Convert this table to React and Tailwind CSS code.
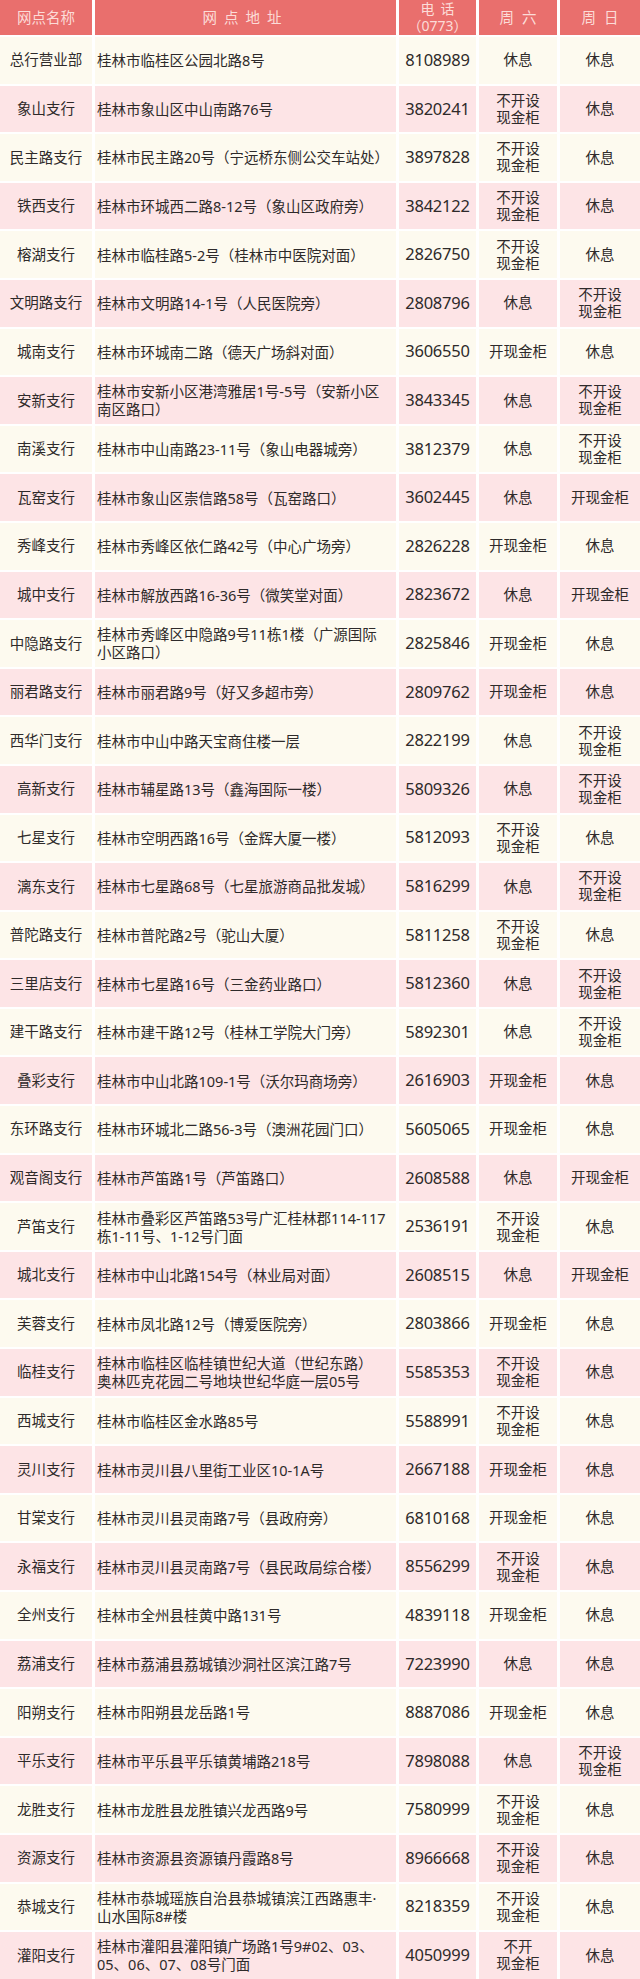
const rows = [
  ["总行营业部", ["桂林市临桂区公园北路8号"], "8108989", "休息", "休息"],
  ["象山支行", ["桂林市象山区中山南路76号"], "3820241", "不开设现金柜", "休息"],
  ["民主路支行", ["桂林市民主路20号（宁远桥东侧公交车站处）"], "3897828", "不开设现金柜", "休息"],
  ["铁西支行", ["桂林市环城西二路8-12号（象山区政府旁）"], "3842122", "不开设现金柜", "休息"],
  ["榕湖支行", ["桂林市临桂路5-2号（桂林市中医院对面）"], "2826750", "不开设现金柜", "休息"],
  ["文明路支行", ["桂林市文明路14-1号（人民医院旁）"], "2808796", "休息", "不开设现金柜"],
  ["城南支行", ["桂林市环城南二路（德天广场斜对面）"], "3606550", "开现金柜", "休息"],
  ["安新支行", ["桂林市安新小区港湾雅居1号-5号（安新小区", "南区路口）"], "3843345", "休息", "不开设现金柜"],
  ["南溪支行", ["桂林市中山南路23-11号（象山电器城旁）"], "3812379", "休息", "不开设现金柜"],
  ["瓦窑支行", ["桂林市象山区崇信路58号（瓦窑路口）"], "3602445", "休息", "开现金柜"],
  ["秀峰支行", ["桂林市秀峰区依仁路42号（中心广场旁）"], "2826228", "开现金柜", "休息"],
  ["城中支行", ["桂林市解放西路16-36号（微笑堂对面）"], "2823672", "休息", "开现金柜"],
  ["中隐路支行", ["桂林市秀峰区中隐路9号11栋1楼（广源国际", "小区路口）"], "2825846", "开现金柜", "休息"],
  ["丽君路支行", ["桂林市丽君路9号（好又多超市旁）"], "2809762", "开现金柜", "休息"],
  ["西华门支行", ["桂林市中山中路天宝商住楼一层"], "2822199", "休息", "不开设现金柜"],
  ["高新支行", ["桂林市辅星路13号（鑫海国际一楼）"], "5809326", "休息", "不开设现金柜"],
  ["七星支行", ["桂林市空明西路16号（金辉大厦一楼）"], "5812093", "不开设现金柜", "休息"],
  ["漓东支行", ["桂林市七星路68号（七星旅游商品批发城）"], "5816299", "休息", "不开设现金柜"],
  ["普陀路支行", ["桂林市普陀路2号（驼山大厦）"], "5811258", "不开设现金柜", "休息"],
  ["三里店支行", ["桂林市七星路16号（三金药业路口）"], "5812360", "休息", "不开设现金柜"],
  ["建干路支行", ["桂林市建干路12号（桂林工学院大门旁）"], "5892301", "休息", "不开设现金柜"],
  ["叠彩支行", ["桂林市中山北路109-1号（沃尔玛商场旁）"], "2616903", "开现金柜", "休息"],
  ["东环路支行", ["桂林市环城北二路56-3号（澳洲花园门口）"], "5605065", "开现金柜", "休息"],
  ["观音阁支行", ["桂林市芦笛路1号（芦笛路口）"], "2608588", "休息", "开现金柜"],
  ["芦笛支行", ["桂林市叠彩区芦笛路53号广汇桂林郡114-117", "栋1-11号、1-12号门面"], "2536191", "不开设现金柜", "休息"],
  ["城北支行", ["桂林市中山北路154号（林业局对面）"], "2608515", "休息", "开现金柜"],
  ["芙蓉支行", ["桂林市凤北路12号（博爱医院旁）"], "2803866", "开现金柜", "休息"],
  ["临桂支行", ["桂林市临桂区临桂镇世纪大道（世纪东路）", "奥林匹克花园二号地块世纪华庭一层05号"], "5585353", "不开设现金柜", "休息"],
  ["西城支行", ["桂林市临桂区金水路85号"], "5588991", "不开设现金柜", "休息"],
  ["灵川支行", ["桂林市灵川县八里街工业区10-1A号"], "2667188", "开现金柜", "休息"],
  ["甘棠支行", ["桂林市灵川县灵南路7号（县政府旁）"], "6810168", "开现金柜", "休息"],
  ["永福支行", ["桂林市灵川县灵南路7号（县民政局综合楼）"], "8556299", "不开设现金柜", "休息"],
  ["全州支行", ["桂林市全州县桂黄中路131号"], "4839118", "开现金柜", "休息"],
  ["荔浦支行", ["桂林市荔浦县荔城镇沙洞社区滨江路7号"], "7223990", "休息", "休息"],
  ["阳朔支行", ["桂林市阳朔县龙岳路1号"], "8887086", "开现金柜", "休息"],
  ["平乐支行", ["桂林市平乐县平乐镇黄埔路218号"], "7898088", "休息", "不开设现金柜"],
  ["龙胜支行", ["桂林市龙胜县龙胜镇兴龙西路9号"], "7580999", "不开设现金柜", "休息"],
  ["资源支行", ["桂林市资源县资源镇丹霞路8号"], "8966668", "不开设现金柜", "休息"],
  ["恭城支行", ["桂林市恭城瑶族自治县恭城镇滨江西路惠丰·", "山水国际8#楼"], "8218359", "不开设现金柜", "休息"],
  ["灌阳支行", ["桂林市灌阳县灌阳镇广场路1号9#02、03、", "05、06、07、08号门面"], "4050999", "不开现金柜", "休息"],
];

const cols = "grid grid-cols-[92px_301px_77px_78px_1fr] gap-x-[3px]";

// 不开设现金柜 is shown on two lines, three characters each
const Hours = ({ text }) => {
  if (text.startsWith("不开")) {
    const first = text.startsWith("不开设") ? "不开设" : "不开";
    return (
      <span className="leading-[17px]">
        {first}
        <br />
        现金柜
      </span>
    );
  }
  return <span>{text}</span>;
};

const BranchRow = ({ row, index }) => {
  const [name, address, phone, sat, sun] = row;
  const bg = index % 2 === 0 ? "bg-[#fdfaef]" : "bg-[#fde4e6]";
  return (
    <div className={`${cols} h-[46.6px]`}>
      <div className={`${bg} flex items-center justify-center whitespace-nowrap`}>{name}</div>
      <div className={`${bg} flex flex-col justify-center pl-[2px] whitespace-nowrap leading-[18px]`}>
        {address.map((line) => (
          <span key={line}>{line}</span>
        ))}
      </div>
      <div className={`${bg} flex items-center justify-center text-[16.5px] tracking-[-0.2px]`}>
        {phone}
      </div>
      <div className={`${bg} flex items-center justify-center text-center`}>
        <Hours text={sat} />
      </div>
      <div className={`${bg} flex items-center justify-center text-center`}>
        <Hours text={sun} />
      </div>
    </div>
  );
};

export default function App() {
  return (
    <div
      className="w-[640px] bg-white flex flex-col gap-y-[2px] text-[14.5px] text-[#2e2a2a]"
      style={{ fontFamily: '"Noto Sans", "Noto Sans CJK SC", sans-serif' }}
    >
      <div className={`${cols} h-[35px] text-[#fcdcd8]`}>
        <div className="bg-[#e96f6d] flex items-center justify-center">网点名称</div>
        <div className="bg-[#e96f6d] flex items-center justify-center tracking-[7px]">网点地址</div>
        <div className="bg-[#e96f6d] flex flex-col items-center justify-center text-[14px]">
          <span className="block h-[16px] leading-[16px] tracking-[6px] pl-[6px]">电话</span>
          <span className="block h-[17px] leading-[17px]">（0773）</span>
        </div>
        <div className="bg-[#e96f6d] flex items-center justify-center tracking-[8px] pl-[8px]">周六</div>
        <div className="bg-[#e96f6d] flex items-center justify-center tracking-[8px] pl-[8px]">周日</div>
      </div>
      {rows.map((row, i) => (
        <BranchRow key={row[0]} row={row} index={i} />
      ))}
    </div>
  );
}
